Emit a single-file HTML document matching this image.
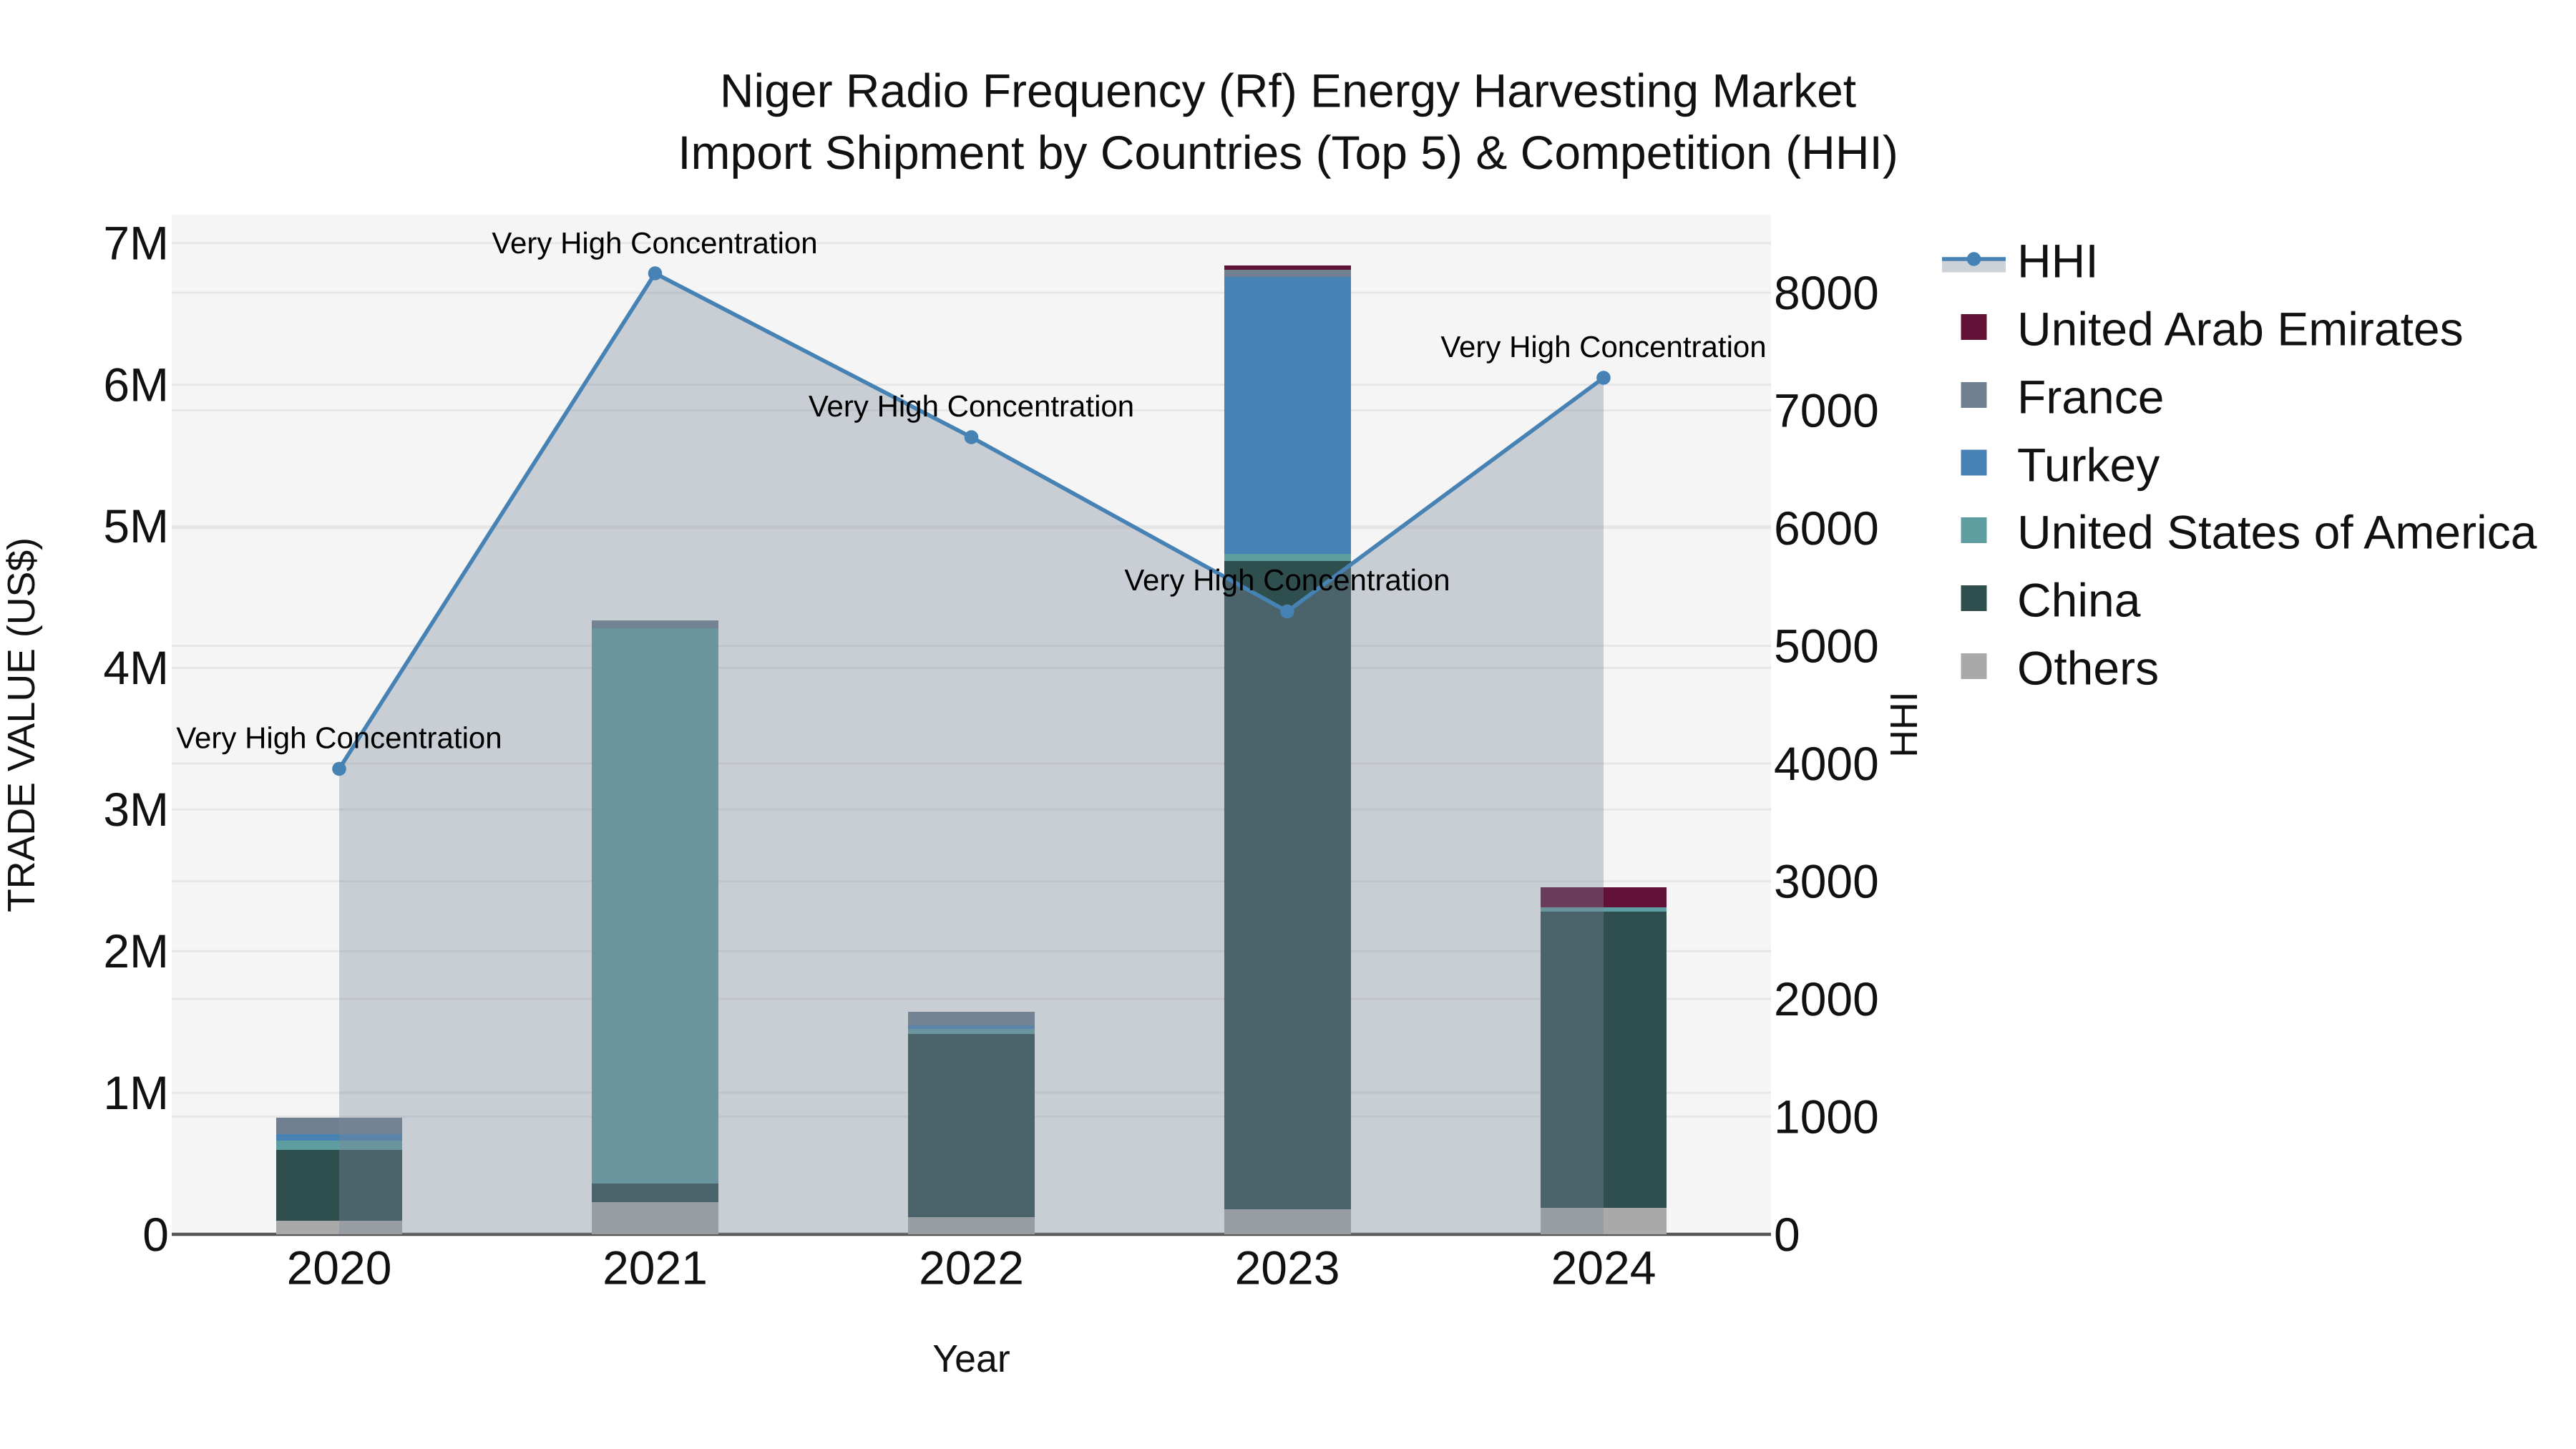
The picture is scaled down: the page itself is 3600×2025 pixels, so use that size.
<!DOCTYPE html>
<html>
<head>
<meta charset="utf-8">
<title>Niger Radio Frequency (Rf) Energy Harvesting Market</title>
<style>
html,body{margin:0;padding:0;background:#fff;width:3600px;height:2025px;overflow:hidden}
svg{display:block}
text{font-family:"Liberation Sans",Arial,sans-serif;fill:#111;text-rendering:geometricPrecision}
.t{font-size:66px}
.a{font-size:42px;fill:#000;text-anchor:middle}
.m{font-size:53.7px}
</style>
</head>
<body>
<svg width="3600" height="2025" viewBox="0 0 3600 2025" xmlns="http://www.w3.org/2000/svg">
<rect width="3600" height="2025" fill="#fff"/>
<rect x="240" y="300" width="2235" height="1425" fill="#f5f5f5"/>
<g stroke="#e6e6e6" stroke-width="2.8" fill="none">
<path d="M240 1527.1H2475M240 1329.2H2475M240 1131.3H2475M240 933.4H2475M240 735.5H2475M240 537.6H2475M240 339.7H2475"/>
<path d="M240 1560.5H2475M240 1396H2475M240 1231.5H2475M240 1067H2475M240 902.5H2475M240 738H2475M240 573.5H2475M240 409H2475"/>
</g>
<path d="M240 1725H2475" stroke="#555" stroke-width="4.6"/>

<g>
<rect x="386" y="1562" width="176" height="23" fill="#708090"/>
<rect x="386" y="1585" width="176" height="9" fill="#4682b4"/>
<rect x="386" y="1594" width="176" height="13" fill="#5f9ea0"/>
<rect x="386" y="1607" width="176" height="99" fill="#2f4f4f"/>
<rect x="386" y="1706" width="176" height="19" fill="#a9a9a9"/>

<rect x="827" y="867" width="177" height="11" fill="#708090"/>
<rect x="827" y="878" width="177" height="776" fill="#5f9ea0"/>
<rect x="827" y="1654" width="177" height="26" fill="#2f4f4f"/>
<rect x="827" y="1680" width="177" height="45" fill="#a9a9a9"/>

<rect x="1269" y="1414" width="177" height="19" fill="#708090"/>
<rect x="1269" y="1433" width="177" height="5" fill="#4682b4"/>
<rect x="1269" y="1438" width="177" height="7" fill="#5f9ea0"/>
<rect x="1269" y="1445" width="177" height="256" fill="#2f4f4f"/>
<rect x="1269" y="1701" width="177" height="24" fill="#a9a9a9"/>

<rect x="1711" y="371" width="177" height="6" fill="#621236"/>
<rect x="1711" y="377" width="177" height="10" fill="#708090"/>
<rect x="1711" y="387" width="177" height="387" fill="#4682b4"/>
<rect x="1711" y="774" width="177" height="10" fill="#5f9ea0"/>
<rect x="1711" y="784" width="177" height="906" fill="#2f4f4f"/>
<rect x="1711" y="1690" width="177" height="35" fill="#a9a9a9"/>

<rect x="2153" y="1240" width="176" height="28" fill="#621236"/>
<rect x="2153" y="1268" width="176" height="6" fill="#5f9ea0"/>
<rect x="2153" y="1274" width="176" height="414" fill="#2f4f4f"/>
<rect x="2153" y="1688" width="176" height="37" fill="#a9a9a9"/>
</g>

<path d="M474 1725V1074.5L915.5 382L1357.5 611L1799 854.5L2241 528V1725Z" fill="#7c889b" fill-opacity="0.37"/>
<path d="M474 1074.5L915.5 382L1357.5 611L1799 854.5L2241 528" fill="none" stroke="#4682b4" stroke-width="5.6" stroke-linejoin="round"/>
<g fill="#4682b4">
<circle cx="474" cy="1074.5" r="9.8"/>
<circle cx="915.5" cy="382" r="9.8"/>
<circle cx="1357.5" cy="611" r="9.8"/>
<circle cx="1799" cy="854.5" r="9.8"/>
<circle cx="2241" cy="528" r="9.8"/>
</g>

<text class="a" x="474" y="1045.5">Very High Concentration</text>
<text class="a" x="915" y="354">Very High Concentration</text>
<text class="a" x="1357.5" y="582">Very High Concentration</text>
<text class="a" x="1799" y="825">Very High Concentration</text>
<text class="a" x="2241" y="499">Very High Concentration</text>

<text class="t" x="1800" y="149.5" text-anchor="middle">Niger Radio Frequency (Rf) Energy Harvesting Market</text>
<text class="t" x="1800" y="236" text-anchor="middle">Import Shipment by Countries (Top 5) &amp; Competition (HHI)</text>

<g text-anchor="end">
<text class="t" x="236" y="1748">0</text>
<text class="t" x="236" y="1550">1M</text>
<text class="t" x="236" y="1352">2M</text>
<text class="t" x="236" y="1154">3M</text>
<text class="t" x="236" y="956">4M</text>
<text class="t" x="236" y="758">5M</text>
<text class="t" x="236" y="560.5">6M</text>
<text class="t" x="236" y="362.5">7M</text>
</g>
<g>
<text class="t" x="2479" y="1748">0</text>
<text class="t" x="2479" y="1583.5">1000</text>
<text class="t" x="2479" y="1419">2000</text>
<text class="t" x="2479" y="1254.5">3000</text>
<text class="t" x="2479" y="1090">4000</text>
<text class="t" x="2479" y="925.5">5000</text>
<text class="t" x="2479" y="761">6000</text>
<text class="t" x="2479" y="596.5">7000</text>
<text class="t" x="2479" y="432">8000</text>
</g>
<g text-anchor="middle">
<text class="t" x="474" y="1794.5">2020</text>
<text class="t" x="915.5" y="1794.5">2021</text>
<text class="t" x="1357.5" y="1794.5">2022</text>
<text class="t" x="1799" y="1794.5">2023</text>
<text class="t" x="2241" y="1794.5">2024</text>
</g>

<text class="m" x="1357.5" y="1917" text-anchor="middle">Year</text>
<text class="m" transform="translate(48 1013) rotate(-90)" text-anchor="middle">TRADE VALUE (US$)</text>
<text class="m" transform="translate(2679 1012.5) rotate(-90)" text-anchor="middle">HHI</text>

<rect x="2714" y="362" width="89" height="18.6" fill="#cdd2d9"/>
<path d="M2714 362H2803" stroke="#4682b4" stroke-width="5.6"/>
<circle cx="2758.5" cy="362" r="9.8" fill="#4682b4"/>
<rect x="2740.5" y="439" width="36" height="36" fill="#621236"/>
<rect x="2740.5" y="534" width="36" height="36" fill="#708090"/>
<rect x="2740.5" y="628.5" width="36" height="36" fill="#4682b4"/>
<rect x="2740.5" y="723" width="36" height="36" fill="#5f9ea0"/>
<rect x="2740.5" y="818" width="36" height="36" fill="#2f4f4f"/>
<rect x="2740.5" y="913" width="36" height="36" fill="#a9a9a9"/>
<text class="t" x="2819" y="387.5">HHI</text>
<text class="t" x="2819" y="482.5">United Arab Emirates</text>
<text class="t" x="2819" y="577.5">France</text>
<text class="t" x="2819" y="672.5">Turkey</text>
<text class="t" x="2819" y="766.5">United States of America</text>
<text class="t" x="2819" y="861.5">China</text>
<text class="t" x="2819" y="956.5">Others</text>
</svg>
</body>
</html>
